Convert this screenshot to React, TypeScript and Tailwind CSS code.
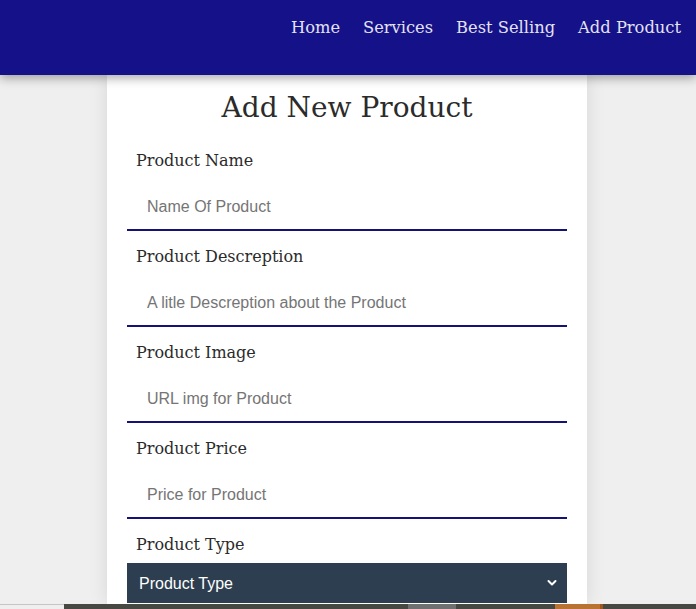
import { useState } from 'react';

const NAV_LINKS = ['Home', 'Services', 'Best Selling', 'Add Product'];

const FIELDS = [
  { label: 'Product Name', placeholder: 'Name Of Product' },
  { label: 'Product Descreption', placeholder: 'A litle Descreption about the Product' },
  { label: 'Product Image', placeholder: 'URL img for Product' },
  { label: 'Product Price', placeholder: 'Price for Product' },
];

const serif = { fontFamily: '"DejaVu Serif", "Liberation Serif", serif' };

const App = () => {
  const [values, setValues] = useState<Record<string, string>>({});

  return (
    <div className="h-[609px] overflow-hidden flex flex-col bg-[#efefef]" style={serif}>
      <nav className="relative z-10 h-[75px] shrink-0 bg-[#141189] shadow-[0_3px_10px_rgba(0,0,0,0.35)]">
        <ul className="flex justify-end gap-[23px] pr-[15px] pt-[16px]">
          {NAV_LINKS.map(link => (
            <li key={link}>
              <a href="#" className="text-[16.3px] leading-6 text-[#e4e2f2]">
                {link}
              </a>
            </li>
          ))}
        </ul>
      </nav>

      <div className="flex-1 min-h-0">
        <form className="ml-[107px] w-[480px] h-full bg-white px-5 pt-[15px] shadow-[0_0_18px_rgba(0,0,0,0.1)]">
          <h1 className="pt-[1px] text-center text-[28px] leading-[34px] text-[#2b2b2b] mb-[24px]">Add New Product</h1>

          {FIELDS.map(field => (
            <div key={field.label} className="mb-[14px]">
              <label className="block pl-[9px] text-[16px] leading-6 text-[#2b2b2b]">{field.label}</label>
              <input
                type="text"
                value={values[field.label] || ''}
                onChange={e => setValues({ ...values, [field.label]: e.target.value })}
                placeholder={field.placeholder}
                className="mt-[7px] block w-full border-b-2 border-[#14117a] bg-transparent pl-5 pt-[15px] pb-[10px] text-[16px] leading-6 text-[#333] placeholder:text-[#757575] outline-none"
                style={{ fontFamily: '"Liberation Sans", Arial, sans-serif' }}
              />
            </div>
          ))}

          <div>
            <label className="block pl-[9px] text-[16px] leading-6 text-[#2b2b2b]">Product Type</label>
            <div className="relative mt-[6px]">
              <select
                className="block h-10 w-full appearance-none bg-[#2c3e50] pl-3 pt-[2px] text-[16px] text-white outline-none"
                style={{ fontFamily: '"Liberation Sans", Arial, sans-serif' }}
              >
                <option>Product Type</option>
                <option>Electronics</option>
                <option>Clothes</option>
              </select>
              <svg
                className="pointer-events-none absolute right-[10px] top-[16px] h-[8px] w-[10px]"
                viewBox="0 0 10 8"
                fill="none"
              >
                <path d="M1.5 2 L5 5.5 L8.5 2" stroke="white" strokeWidth="2" strokeLinecap="round" strokeLinejoin="round" />
              </svg>
            </div>
          </div>
        </form>
      </div>

      <div className="flex h-[5px] shrink-0">
        <div className="w-[64px] border-t border-[#c5c5c5] bg-[#efefef]" />
        <div className="w-[344px] bg-[#484843]" />
        <div className="w-[48px] bg-[#707070]" />
        <div className="w-[99px] bg-[#484843]" />
        <div className="w-[45px] bg-[#b87333]" />
        <div className="w-[3px] bg-[#a0551f]" />
        <div className="flex-1 bg-[#484843]" />
      </div>
    </div>
  );
};

export default App;
